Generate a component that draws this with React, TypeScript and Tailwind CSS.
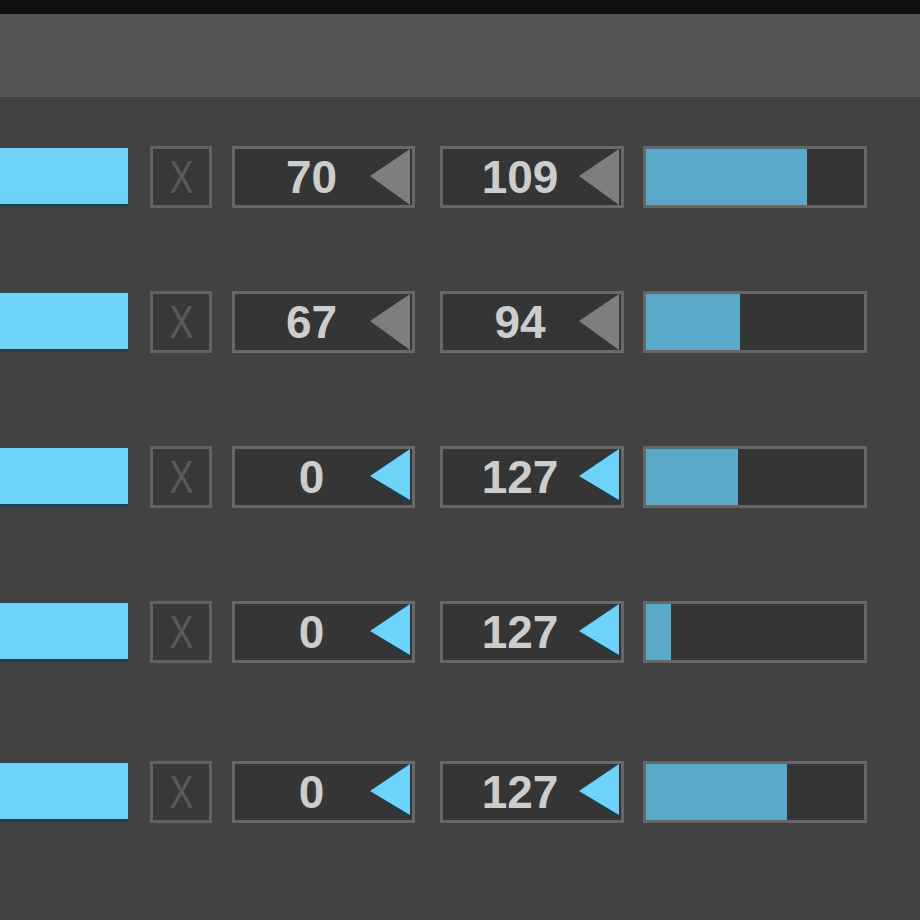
import React from "react";

const rows = [
  { a: "70", b: "109", active: false, fill: 161, mt: "mt-[49px]" },
  { a: "67", b: "94", active: false, fill: 94, mt: "mt-[83px]" },
  { a: "0", b: "127", active: true, fill: 92, mt: "mt-[93px]" },
  { a: "0", b: "127", active: true, fill: 25, mt: "mt-[93px]" },
  { a: "0", b: "127", active: true, fill: 141, mt: "mt-[98px]" },
];

function Tri({ active }: { active: boolean }) {
  return (
    <svg width="42" height="56" viewBox="0 0 42 56" className="absolute right-0 top-0">
      {active ? (
        <>
          <polygon points="0,27 40,56 40,49" fill="#173f4e" />
          <polygon points="0,27 40,0 40,51" fill="#6dd3f9" />
        </>
      ) : (
        <polygon points="0,27 40,0 40,56" fill="#7e7e7e" />
      )}
    </svg>
  );
}

function NumBox({ v, active, w }: { v: string; active: boolean; w: string }) {
  return (
    <div className={`relative h-[62px] ${w} border-[3px] border-[#686868] bg-[#353535]`}>
      <div className="flex h-full items-center justify-center pr-[24px] text-[46px] font-bold leading-none text-[#cdcdcd]">
        {v}
      </div>
      <Tri active={active} />
    </div>
  );
}

export default function App() {
  return (
    <div
      className="w-[920px] h-[920px] overflow-hidden bg-[#424242] flex flex-col"
      style={{ fontFamily: '"Liberation Sans", Arial, sans-serif' }}
    >
      <div className="h-[14px] bg-[#111]" />
      <div className="h-[83px] bg-[#555] border-b-[3px] border-[#575757]" />
      {rows.map((r, i) => (
        <div key={i} className={`flex items-center ${r.mt}`}>
          <div className="w-[128px] h-[59px] bg-[#6dd3f9] border-b-[3px] border-[#174452]" />
          <div className="ml-[22px] w-[62px] h-[62px] border-[3px] border-[#626262] bg-[#383838] flex items-center justify-center text-[46px] leading-none text-[#5a5a5a]">
            <span className="inline-block scale-x-[0.78]">X</span>
          </div>
          <div className="ml-[20px]">
            <NumBox v={r.a} active={r.active} w="w-[183px]" />
          </div>
          <div className="ml-[25px]">
            <NumBox v={r.b} active={r.active} w="w-[184px]" />
          </div>
          <div className="ml-[19px] w-[224px] h-[62px] border-[3px] border-[#666] bg-[#353535] flex">
            <div className="h-full bg-[#5ba9c9]" style={{ width: r.fill }} />
          </div>
        </div>
      ))}
    </div>
  );
}
